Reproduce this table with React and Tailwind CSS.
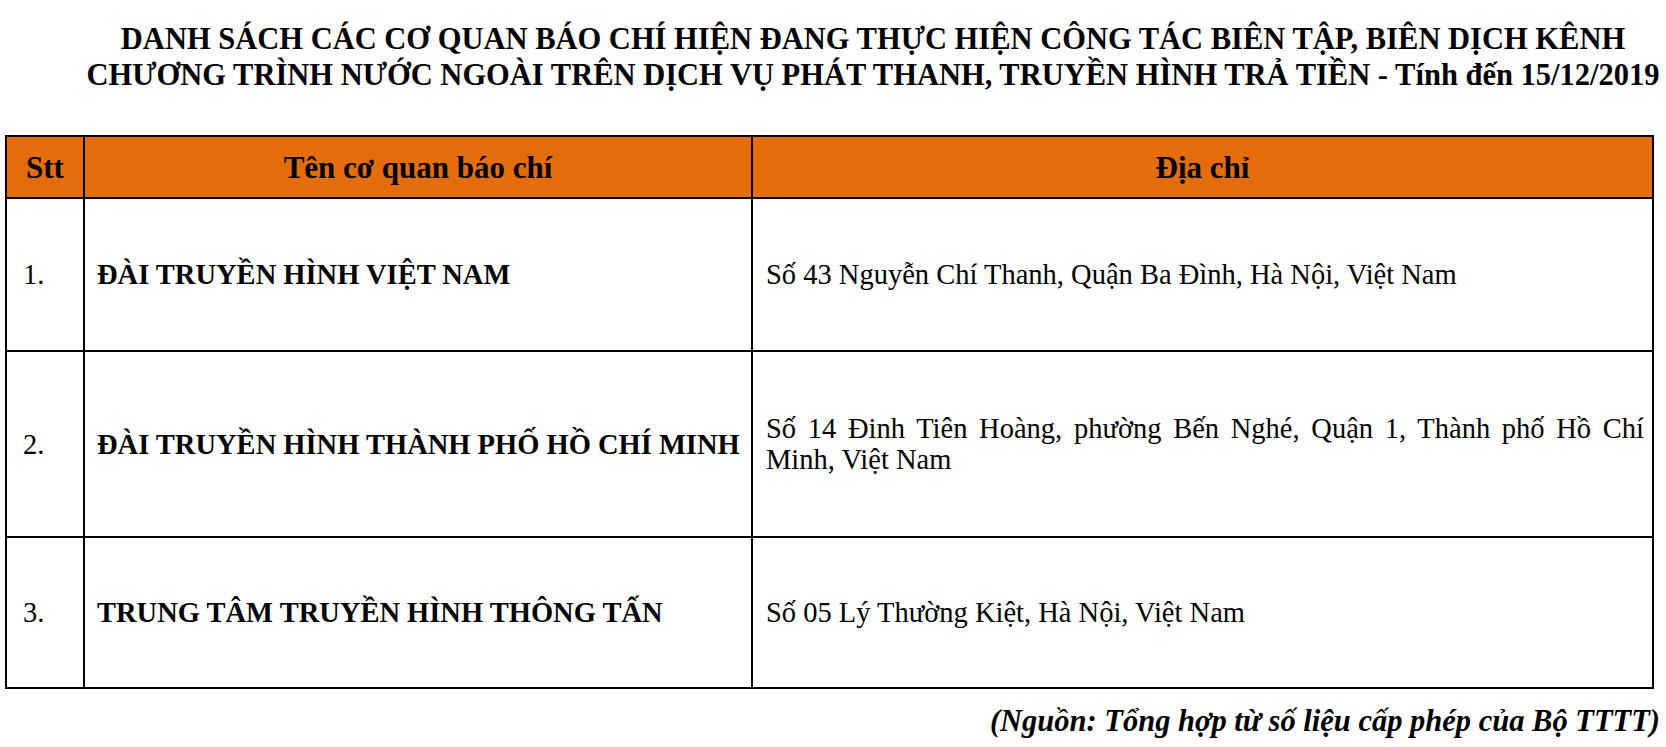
import React from "react";

const rows = [
  {
    no: "1.",
    name: "ĐÀI TRUYỀN HÌNH VIỆT NAM",
    addr: "Số 43 Nguyễn Chí Thanh, Quận Ba Đình, Hà Nội, Việt Nam",
    h: "h-[153px]",
  },
  {
    no: "2.",
    name: "ĐÀI TRUYỀN HÌNH THÀNH PHỐ HỒ CHÍ MINH",
    addr: "Số 14 Đinh Tiên Hoàng, phường Bến Nghé, Quận 1, Thành phố Hồ Chí Minh, Việt Nam",
    h: "h-[186px]",
  },
  {
    no: "3.",
    name: "TRUNG TÂM TRUYỀN HÌNH THÔNG TẤN",
    addr: "Số 05 Lý Thường Kiệt, Hà Nội, Việt Nam",
    h: "h-[151px]",
  },
];

export default function App() {
  return (
    <div className="w-[1666px] h-[747px] bg-white text-black font-['Liberation_Serif',serif] overflow-hidden">
      <div className="pt-[21px] pl-[80px] text-center font-bold text-[30.5px] leading-[36px]">
        <div>DANH SÁCH CÁC CƠ QUAN BÁO CHÍ HIỆN ĐANG THỰC HIỆN CÔNG TÁC BIÊN TẬP, BIÊN DỊCH KÊNH</div>
        <div>CHƯƠNG TRÌNH NƯỚC NGOÀI TRÊN DỊCH VỤ PHÁT THANH, TRUYỀN HÌNH TRẢ TIỀN - Tính đến 15/12/2019</div>
      </div>

      <table className="mt-[42px] ml-[5px] w-[1649px] border-collapse table-fixed text-[28.5px] leading-[31px]">
        <colgroup>
          <col className="w-[78px]" />
          <col className="w-[668px]" />
          <col className="w-[901px]" />
        </colgroup>
        <thead>
          <tr className="h-[62px] bg-[#e46c0a] text-[31px]">
            <th className="border-2 border-black font-bold text-center align-middle p-0">Stt</th>
            <th className="border-2 border-black font-bold text-center align-middle p-0">Tên cơ quan báo chí</th>
            <th className="border-2 border-black font-bold text-center align-middle p-0">Địa chỉ</th>
          </tr>
        </thead>
        <tbody>
          {rows.map((r) => (
            <tr key={r.no} className={r.h}>
              <td className="border-2 border-black align-middle pl-[16px] pr-0 py-0">{r.no}</td>
              <td className="border-2 border-black align-middle font-bold pl-[12px] pr-0 py-0 whitespace-nowrap">{r.name}</td>
              <td className="border-2 border-black align-middle pl-[13px] pr-[8px] py-0 text-justify">{r.addr}</td>
            </tr>
          ))}
        </tbody>
      </table>

      <div className="mt-[14px] pr-[6px] text-right font-bold italic text-[30.5px] leading-[36px]">
        (Nguồn: Tổng hợp từ số liệu cấp phép của Bộ TTTT)
      </div>
    </div>
  );
}
